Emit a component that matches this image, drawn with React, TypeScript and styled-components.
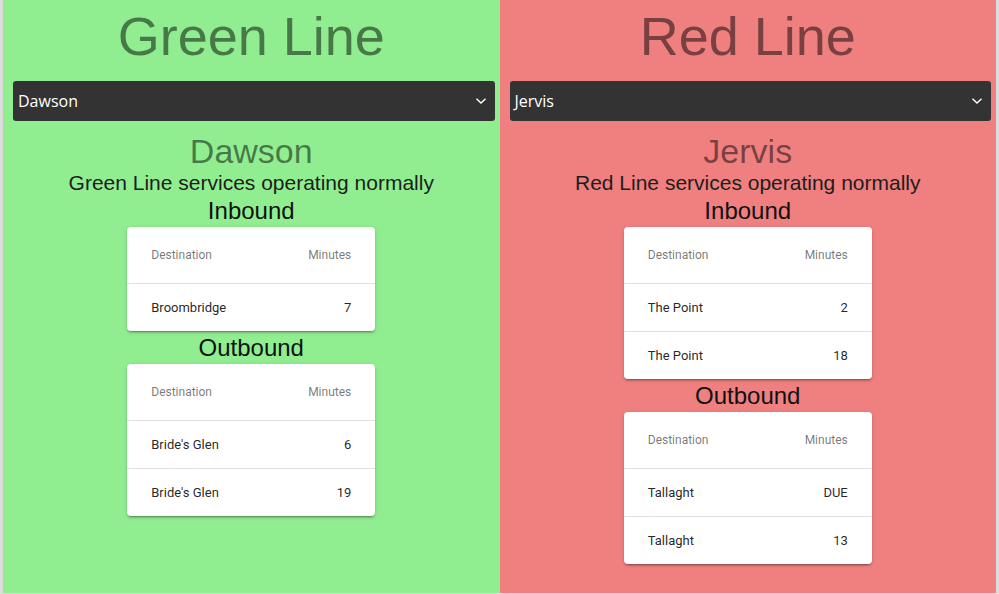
import React from "react";
import styled, { createGlobalStyle } from "styled-components";

const Global = createGlobalStyle`
  html, body { margin: 0; padding: 0; background: #dcdcdc; }
  body { font-family: "Liberation Sans", Arial, sans-serif; }
`;

const Page = styled.div`
  display: flex;
  padding: 0 3px;
  height: 593px;
  overflow: hidden;
`;

const Panel = styled.section<{ $bg: string }>`
  flex: 1;
  background: ${(p) => p.$bg};
  display: flex;
  flex-direction: column;
  align-items: center;
  text-align: center;
`;

const Title = styled.h1`
  margin: 0;
  font-size: 54px;
  font-weight: 400;
  line-height: 72px;
  height: 81px;
  color: rgba(0, 0, 0, 0.5);
`;

const SelectBox = styled.div`
  align-self: stretch;
  margin: 0 5px 0 10px;
  height: 40px;
  background: #333333;
  border-radius: 3px;
  display: flex;
  align-items: center;
  justify-content: space-between;
  padding: 0 8px 0 5px;
  color: #ffffff;
  font-family: "Open Sans", "Noto Sans", sans-serif;
  font-size: 16px;
  text-align: left;
`;

const Station = styled.h2`
  margin: 10px 0 0;
  font-size: 34px;
  font-weight: 400;
  line-height: 40px;
  color: rgba(0, 0, 0, 0.5);
`;

const Status = styled.div`
  font-size: 21px;
  line-height: 24px;
  margin-bottom: 2px;
  color: #1d1d1d;
`;

const Direction = styled.h3`
  margin: 0 0 2px;
  font-size: 24px;
  font-weight: 400;
  line-height: 28px;
  color: #111111;
`;

const Card = styled.div`
  width: 248px;
  background: #ffffff;
  border-radius: 4px;
  box-shadow: 0px 3px 1px -2px rgba(0, 0, 0, 0.2), 0px 2px 2px 0px rgba(0, 0, 0, 0.14),
    0px 1px 5px 0px rgba(0, 0, 0, 0.12);
  margin-bottom: 3px;
  overflow: hidden;
`;

const Table = styled.table`
  width: 100%;
  border-collapse: collapse;
  font-family: Roboto, "Liberation Sans", sans-serif;
  font-size: 13px;
`;

const Th = styled.th<{ $right?: boolean }>`
  height: 56px;
  padding: 0 ${(p) => (p.$right ? "24px" : "0")} 0 ${(p) => (p.$right ? "0" : "24px")};
  text-align: ${(p) => (p.$right ? "right" : "left")};
  font-weight: 400;
  font-size: 12px;
  color: rgba(0, 0, 0, 0.54);
  border-bottom: 1px solid #e0e0e0;
  box-sizing: border-box;
`;

const Td = styled.td<{ $right?: boolean; $last?: boolean }>`
  height: 48px;
  padding: 0 ${(p) => (p.$right ? "24px" : "0")} 0 ${(p) => (p.$right ? "0" : "24px")};
  text-align: ${(p) => (p.$right ? "right" : "left")};
  color: rgba(0, 0, 0, 0.87);
  border-bottom: ${(p) => (p.$last ? "none" : "1px solid #e0e0e0")};
  box-sizing: border-box;
`;

type Row = { dest: string; min: string };

const Chevron = () => (
  <svg width="12" height="8" viewBox="0 0 12 8" fill="none">
    <path d="M1.5 1.8 L6 6 L10.5 1.8" stroke="#ffffff" strokeWidth="1.4" />
  </svg>
);

const Times = ({ rows }: { rows: Row[] }) => (
  <Card>
    <Table>
      <thead>
        <tr>
          <Th>Destination</Th>
          <Th $right>Minutes</Th>
        </tr>
      </thead>
      <tbody>
        {rows.map((r, i) => (
          <tr key={i}>
            <Td $last={i === rows.length - 1}>{r.dest}</Td>
            <Td $right $last={i === rows.length - 1}>
              {r.min}
            </Td>
          </tr>
        ))}
      </tbody>
    </Table>
  </Card>
);

type Line = {
  name: string;
  bg: string;
  stop: string;
  inbound: Row[];
  outbound: Row[];
};

const lines: Line[] = [
  {
    name: "Green Line",
    bg: "#90ee90",
    stop: "Dawson",
    inbound: [{ dest: "Broombridge", min: "7" }],
    outbound: [
      { dest: "Bride's Glen", min: "6" },
      { dest: "Bride's Glen", min: "19" },
    ],
  },
  {
    name: "Red Line",
    bg: "#f08080",
    stop: "Jervis",
    inbound: [
      { dest: "The Point", min: "2" },
      { dest: "The Point", min: "18" },
    ],
    outbound: [
      { dest: "Tallaght", min: "DUE" },
      { dest: "Tallaght", min: "13" },
    ],
  },
];

export default function App() {
  return (
    <>
      <Global />
      <Page>
        {lines.map((l) => (
          <Panel key={l.name} $bg={l.bg}>
            <Title>{l.name}</Title>
            <SelectBox>
              <span>{l.stop}</span>
              <Chevron />
            </SelectBox>
            <Station>{l.stop}</Station>
            <Status>{l.name} services operating normally</Status>
            <Direction>Inbound</Direction>
            <Times rows={l.inbound} />
            <Direction>Outbound</Direction>
            <Times rows={l.outbound} />
          </Panel>
        ))}
      </Page>
    </>
  );
}
